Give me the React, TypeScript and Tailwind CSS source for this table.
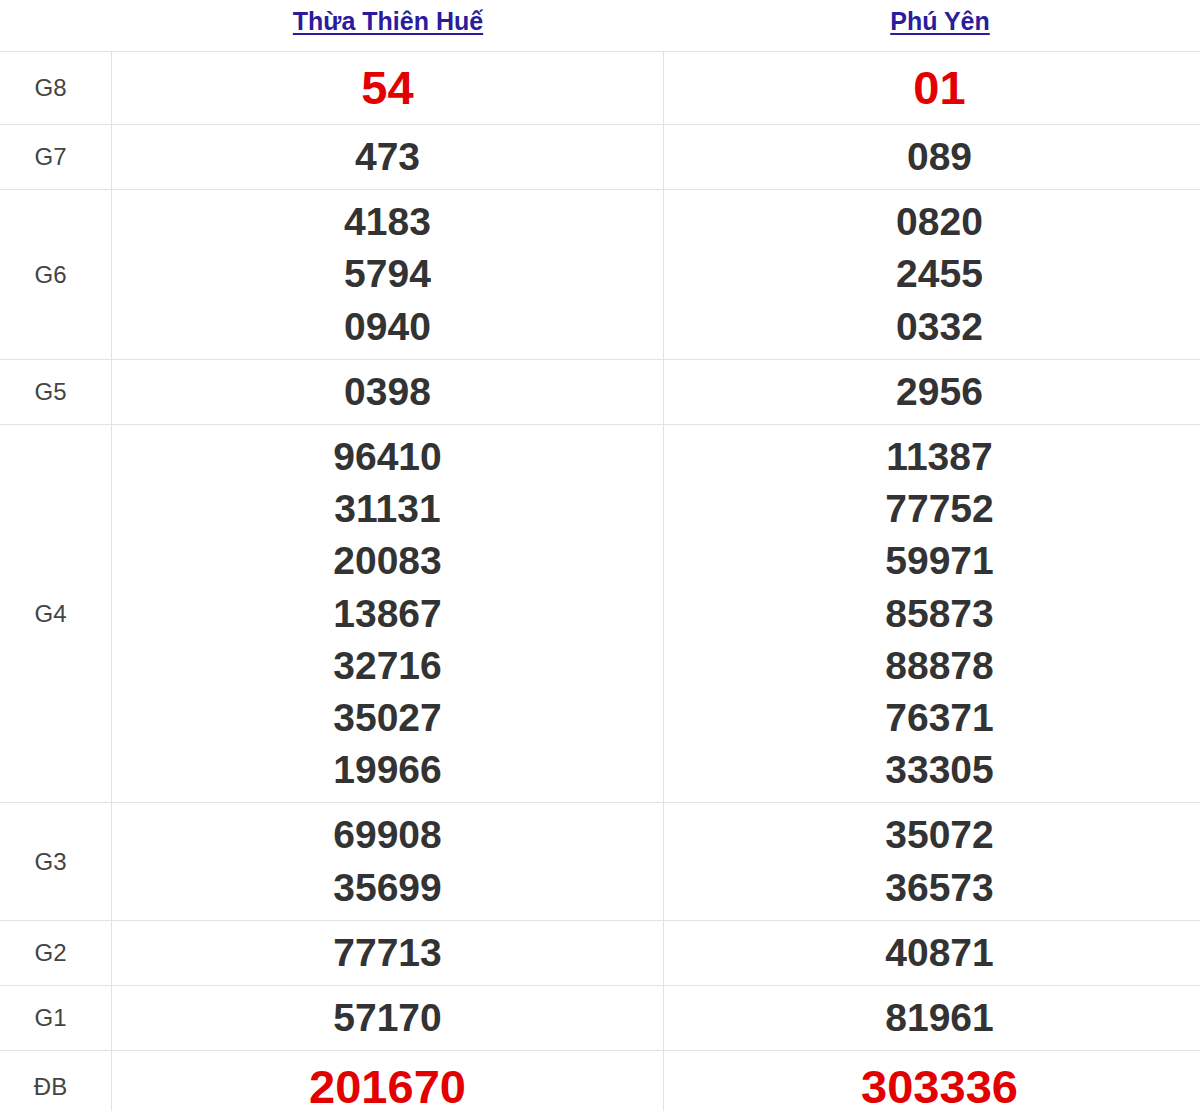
const rows: { label: string; a: string[]; b: string[]; big?: boolean }[] = [
  { label: "G8", a: ["54"], b: ["01"], big: true },
  { label: "G7", a: ["473"], b: ["089"] },
  { label: "G6", a: ["4183", "5794", "0940"], b: ["0820", "2455", "0332"] },
  { label: "G5", a: ["0398"], b: ["2956"] },
  {
    label: "G4",
    a: ["96410", "31131", "20083", "13867", "32716", "35027", "19966"],
    b: ["11387", "77752", "59971", "85873", "88878", "76371", "33305"],
  },
  { label: "G3", a: ["69908", "35699"], b: ["35072", "36573"] },
  { label: "G2", a: ["77713"], b: ["40871"] },
  { label: "G1", a: ["57170"], b: ["81961"] },
  { label: "ĐB", a: ["201670"], b: ["303336"], big: true },
];

const Cell = ({ nums, big }: { nums: string[]; big?: boolean }) => (
  <div className="w-[552px] shrink-0 border-r border-[#e2e2e2] flex flex-col items-center justify-center py-[6px]">
    {nums.map((n) => (
      <div
        key={n}
        className={
          big
            ? "text-[47px] leading-[60px] font-bold text-[#e30000]"
            : "text-[39px] leading-[52.2px] font-bold text-[#333333]"
        }
      >
        {n}
      </div>
    ))}
  </div>
);

export default function App() {
  return (
    <div
      className="w-[1200px] h-[1111px] overflow-hidden bg-white"
      style={{ fontFamily: '"Liberation Sans", Arial, sans-serif' }}
    >
      <div className="w-[1216px]">
        <div className="flex h-[52px] border-b border-[#e2e2e2]">
          <div className="w-[112px] shrink-0" />
          <div className="w-[552px] shrink-0 flex justify-center pt-[6px]">
            <a className="text-[25px] leading-[30px] font-bold text-[#2a1c9c] underline underline-offset-[3px]">
              Thừa Thiên Huế
            </a>
          </div>
          <div className="w-[552px] shrink-0 flex justify-center pt-[6px]">
            <a className="text-[25px] leading-[30px] font-bold text-[#2a1c9c] underline underline-offset-[3px]">
              Phú Yên
            </a>
          </div>
        </div>
        {rows.map((r) => (
          <div key={r.label} className="flex border-b border-[#e2e2e2]">
            <div className="w-[112px] shrink-0 border-r border-[#e2e2e2] flex items-center justify-center pr-[10px] text-[24px] text-[#444444]">
              {r.label}
            </div>
            <Cell nums={r.a} big={r.big} />
            <Cell nums={r.b} big={r.big} />
          </div>
        ))}
      </div>
    </div>
  );
}
